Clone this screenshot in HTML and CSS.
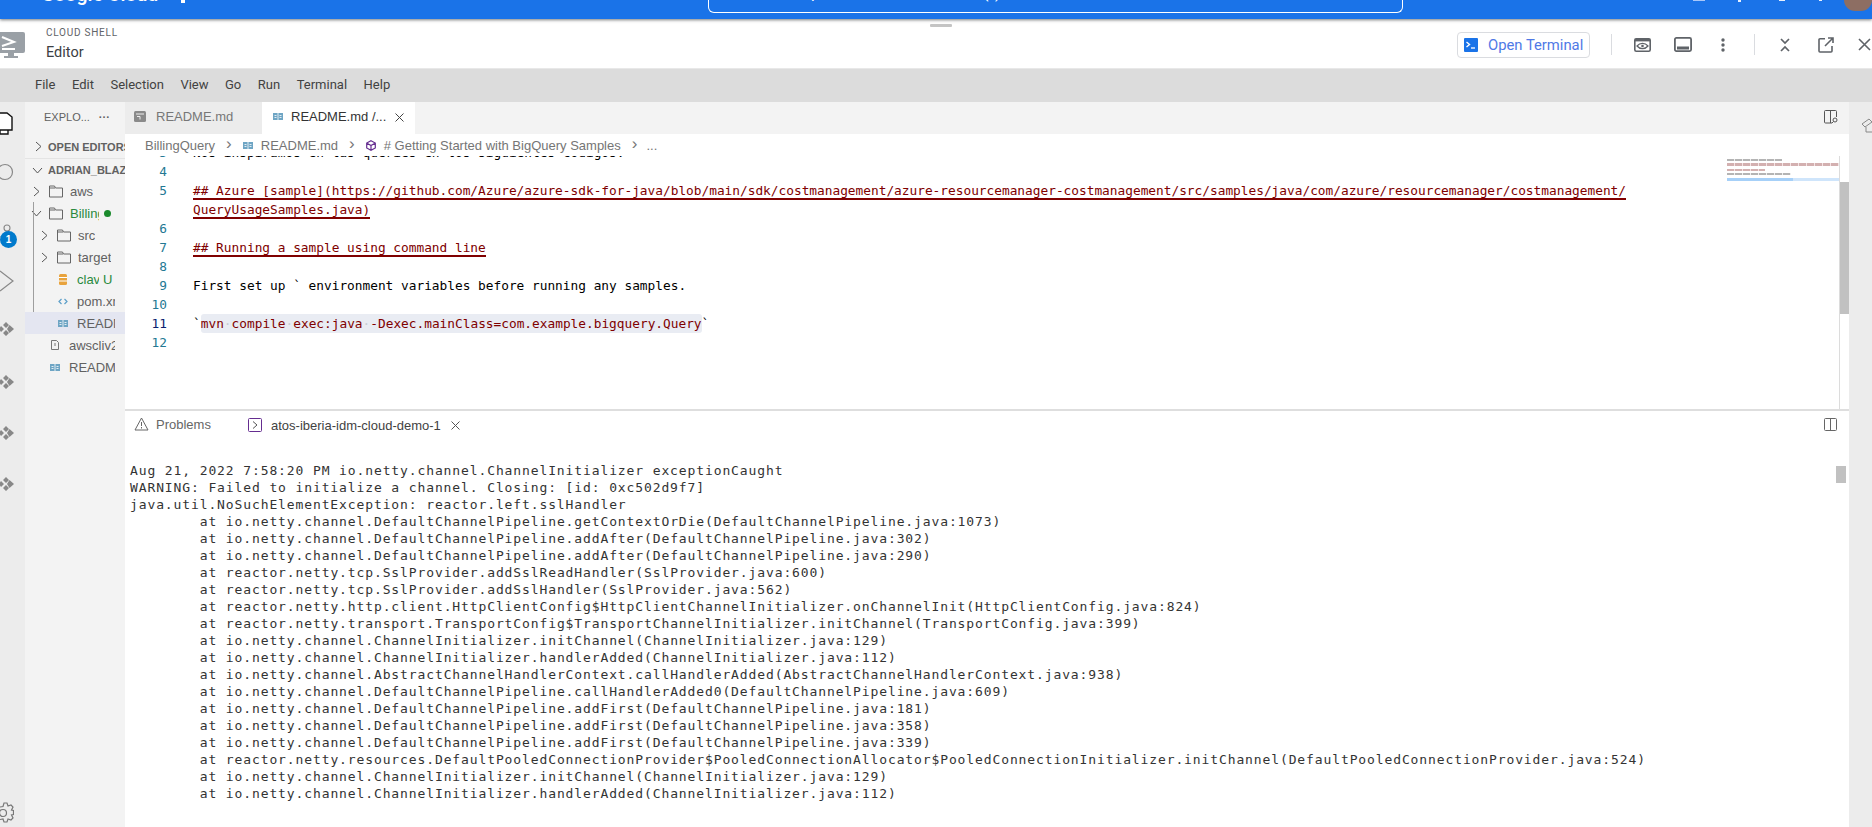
FILE: index.html
```html
<!DOCTYPE html>
<html lang="en">
<head>
<meta charset="utf-8">
<title>Cloud Shell Editor</title>
<link rel="stylesheet" href="styles.css">
</head>
<body>
<div class="topbar">
  <span class="brand">Google Cloud</span>
  <span class="project-dot"></span>
  <div class="search"><span class="search-text">Search products and resources (/)</span></div>
  <div class="top-right">
    <span class="top-bit t1"></span><span class="top-bit t2"></span><span class="top-bit t3"></span><span class="top-bit t4"></span>
    <span class="avatar"></span>
  </div>
</div>
<div class="grip"></div>
<header class="shell-header">
  <svg class="shell-logo" width="25" height="27" viewBox="0 0 25 27"><path fill="#9aa0a6" d="M0 0h23a2 2 0 0 1 2 2v17a2 2 0 0 1-2 2H0z"/><path fill="#9aa0a6" d="M8 21h6v3h4v2H4v-2h4z"/><path fill="none" stroke="#fff" stroke-width="2" d="M2 5l12 5-12 4"/><path stroke="#fff" stroke-width="2" d="M2 17h13"/></svg>
  <div class="shell-title"><div class="shell-kicker">CLOUD SHELL</div><div class="shell-name">Editor</div></div>
  <div class="spacer"></div>
  <button class="open-terminal">
    <svg width="14" height="14" viewBox="0 0 14 14"><rect width="14" height="14" rx="1" fill="#1a73e8"/><path d="M2.500 4l3 2.500-3 2.500" fill="none" stroke="#fff" stroke-width="1.400"/><path d="M7 10h4" stroke="#fff" stroke-width="1.300"/></svg>
    <span>Open Terminal</span>
  </button>
  <span class="divider d1"></span>
  <svg class="hicon i-eye" width="17" height="14" viewBox="0 0 17 14"><rect x=".8" y=".8" width="15.400" height="12.400" rx="1.500" fill="none" stroke="#5f6368" stroke-width="1.600"/><rect x=".8" y=".8" width="15.400" height="2.600" fill="#5f6368"/><path d="M3 8c3-3.600 8-3.600 11 0-3 3.600-8 3.600-11 0z" fill="none" stroke="#5f6368" stroke-width="1.200"/><circle cx="8.500" cy="8" r="1.300" fill="#5f6368"/></svg>
  <svg class="hicon i-panel" width="18" height="15" viewBox="0 0 18 15"><rect x=".9" y=".9" width="16.200" height="13.200" rx="1.500" fill="none" stroke="#5f6368" stroke-width="1.800"/><rect x="3" y="9.500" width="12" height="3" fill="#5f6368"/></svg>
  <svg class="hicon i-dots" width="4" height="14" viewBox="0 0 4 14"><circle cx="2" cy="2" r="1.700" fill="#5f6368"/><circle cx="2" cy="7" r="1.700" fill="#5f6368"/><circle cx="2" cy="12" r="1.700" fill="#5f6368"/></svg>
  <span class="divider d2"></span>
  <svg class="hicon i-fold" width="10" height="14" viewBox="0 0 10 14"><path d="M1 1l4 4 4-4M1 13l4-4 4 4" fill="none" stroke="#5f6368" stroke-width="1.700"/></svg>
  <svg class="hicon i-open" width="16" height="16" viewBox="0 0 16 16"><path d="M7 1.800H2a1 1 0 0 0-1 1V14a1 1 0 0 0 1 1h11a1 1 0 0 0 1-1V9M10 1h5v5M15 1L7 9" fill="none" stroke="#5f6368" stroke-width="1.600"/></svg>
  <svg class="hicon i-close" width="13" height="13" viewBox="0 0 13 13"><path d="M1 1l11 11M12 1L1 12" stroke="#5f6368" stroke-width="1.600"/></svg>
</header>
<nav class="menubar">
  <span>File</span><span>Edit</span><span>Selection</span><span>View</span><span>Go</span><span>Run</span><span>Terminal</span><span>Help</span>
</nav>
<div class="workbench">
  <aside class="activity">
    <svg class="act a1" width="13" height="24" viewBox="0 0 13 24"><path d="M0 1h7l5 4v13H0M0 18v4h8v-4" fill="#fff" stroke="#111" stroke-width="1.400"/></svg>
    <svg class="act a2" width="14" height="18" viewBox="0 0 14 18"><circle cx="5" cy="9" r="7.500" fill="none" stroke="#888" stroke-width="1.200"/></svg>
    <div class="act a3">
      <svg width="14" height="16" viewBox="0 0 14 16"><circle cx="7" cy="4" r="3" fill="none" stroke="#888" stroke-width="1.100"/><path d="M0 13c4 0 7-3 7-6" fill="none" stroke="#888" stroke-width="1.100"/></svg>
      <span class="badge">1</span>
    </div>
    <svg class="act a4" width="14" height="26" viewBox="0 0 14 26"><path d="M0 3l13 10L0 23" fill="none" stroke="#888" stroke-width="1.200"/></svg>
    <svg class="act a5" width="14" height="14" viewBox="0 0 14 14"><path fill="#888" d="M6 0l3 3-3 3-3-3zM6 8l3 3-3 3-3-3zM9.500 3L14 7l-4.500 4L7 7zM1 4l3 3-3 3-2-3z"/></svg>
    <svg class="act a6" width="14" height="14" viewBox="0 0 14 14"><path fill="#888" d="M6 0l3 3-3 3-3-3zM6 8l3 3-3 3-3-3zM9.500 3L14 7l-4.500 4L7 7zM1 4l3 3-3 3-2-3z"/></svg>
    <svg class="act a7" width="14" height="14" viewBox="0 0 14 14"><path fill="#888" d="M6 0l3 3-3 3-3-3zM6 8l3 3-3 3-3-3zM9.500 3L14 7l-4.500 4L7 7zM1 4l3 3-3 3-2-3z"/></svg>
    <svg class="act a8" width="14" height="14" viewBox="0 0 14 14"><path fill="#888" d="M6 0l3 3-3 3-3-3zM6 8l3 3-3 3-3-3zM9.500 3L14 7l-4.500 4L7 7zM1 4l3 3-3 3-2-3z"/></svg>
    <div class="spacer"></div>
    <svg class="act a9" width="14" height="24" viewBox="0 0 14 24"><path d="M0 5l3-.5L4 1h3l1 3 3-1 2 2-1.500 3 2 .500v4l-2 .500L13 16l-2 2-3-1-1 3H4l-1-3-3 .500" fill="none" stroke="#777" stroke-width="1.200"/><circle cx="3" cy="11" r="3.500" fill="none" stroke="#777" stroke-width="1.200"/></svg>
  </aside>
  <aside class="sidebar">
    <div class="side-head"><span>EXPLO...</span><span class="more">···</span></div>
    <div class="sec open-ed"><svg class="chev" width="7" height="11" viewBox="0 0 7 11"><path d="M1 1l5 4.500L1 10" fill="none" stroke="#555" stroke-width="1"/></svg><b>OPEN EDITORS</b></div>
    <div class="sec root"><svg class="chev-d" width="11" height="7" viewBox="0 0 11 7"><path d="M1 1l4.500 5L10 1" fill="none" stroke="#555" stroke-width="1"/></svg><b>ADRIAN_BLAZQUEZ</b></div>
    <div class="tree">
      <span class="guide"></span>
      <div class="row lvl1"><svg class="chev" width="7" height="11" viewBox="0 0 7 11"><path d="M1 1l5 4.500L1 10" fill="none" stroke="#555"/></svg><svg class="folder" width="14" height="13" viewBox="0 0 14 13"><path d="M.5 1h5l1 2h7v9H.5zM.5 3H6" fill="none" stroke="#666"/></svg><span class="name">aws</span></div>
      <div class="row lvl1 billing"><svg class="chev-d" width="11" height="7" viewBox="0 0 11 7"><path d="M1 1l4.500 5L10 1" fill="none" stroke="#555"/></svg><svg class="folder" width="14" height="13" viewBox="0 0 14 13"><path d="M.5 1h5l1 2h7v9H.5zM.5 3H6" fill="none" stroke="#666"/></svg><span class="name green clipped">BillingQuery</span><span class="dot"></span></div>
      <div class="row lvl2"><svg class="chev" width="7" height="11" viewBox="0 0 7 11"><path d="M1 1l5 4.500L1 10" fill="none" stroke="#555"/></svg><svg class="folder" width="14" height="13" viewBox="0 0 14 13"><path d="M.5 1h5l1 2h7v9H.5zM.5 3H6" fill="none" stroke="#666"/></svg><span class="name">src</span></div>
      <div class="row lvl2"><svg class="chev" width="7" height="11" viewBox="0 0 7 11"><path d="M1 1l5 4.500L1 10" fill="none" stroke="#555"/></svg><svg class="folder" width="14" height="13" viewBox="0 0 14 13"><path d="M.5 1h5l1 2h7v9H.5zM.5 3H6" fill="none" stroke="#666"/></svg><span class="name">target</span></div>
      <div class="row file2"><svg class="ficon" width="9" height="11" viewBox="0 0 9 11"><rect width="8" height="11" x=".5" rx="1.500" fill="#e8a33d"/><path d="M.5 3.500h8M.5 7h8" stroke="#fff"/></svg><span class="name green short">clave.json</span><span class="u">U</span></div>
      <div class="row file2"><svg class="ficon" width="10" height="7" viewBox="0 0 10 7"><path d="M3.500 1L1 3.500 3.500 6M6.500 1L9 3.500 6.500 6" fill="none" stroke="#5c9fc9" stroke-width="1.200"/></svg><span class="name">pom.xml</span></div>
      <div class="row file2 selected"><svg class="ficon" width="10" height="7" viewBox="0 0 10 7"><rect width="10" height="7" fill="#6ea5c4"/><path d="M5 0v7M1.500 2.500h2M1.500 4.500h2M6.500 2.500h2M6.500 4.500h2" stroke="#fff" stroke-width=".8"/></svg><span class="name">README.md</span></div>
      <div class="row file1"><svg class="ficon" width="8" height="10" viewBox="0 0 8 10"><path d="M.5.500h5l2 2v7h-7z" fill="none" stroke="#777"/><path d="M4 3v3" stroke="#777"/></svg><span class="name">awscliv2.zip</span></div>
      <div class="row file1"><svg class="ficon" width="10" height="7" viewBox="0 0 10 7"><rect width="10" height="7" fill="#6ea5c4"/><path d="M5 0v7M1.500 2.500h2M1.500 4.500h2M6.500 2.500h2M6.500 4.500h2" stroke="#fff" stroke-width=".8"/></svg><span class="name">README.md</span></div>
    </div>
  </aside>
  <main class="main">
    <div class="tabs">
      <div class="tab tab-off"><svg width="12" height="11" viewBox="0 0 12 11"><rect width="12" height="11" rx="1.500" fill="#8a8a8a"/><path d="M2 3h8M3 5.500h3v3" stroke="#eee" fill="none"/></svg><span>README.md</span></div>
      <div class="tab tab-on"><svg width="10" height="7" viewBox="0 0 10 7"><rect width="10" height="7" fill="#6ea5c4"/><path d="M5 0v7M1.500 2.500h2M1.500 4.500h2M6.500 2.500h2M6.500 4.500h2" stroke="#fff" stroke-width=".8"/></svg><span>README.md /...</span><svg class="tab-x" width="9" height="9" viewBox="0 0 9 9"><path d="M.5.500l8 8M8.500.500l-8 8" stroke="#444" stroke-width="1"/></svg></div>
      <div class="spacer"></div>
      <svg class="split-preview" width="14" height="14" viewBox="0 0 14 14"><path d="M8 13H1.500a1 1 0 0 1-1-1V1.500a1 1 0 0 1 1-1h10a1 1 0 0 1 1 1V7M6.500.500V13" fill="none" stroke="#555"/><circle cx="11" cy="10" r="2" fill="none" stroke="#555"/><path d="M9.500 11.500L8 13" stroke="#555"/></svg>
    </div>
    <div class="editor">
      <div class="crumbs">
        <span>BillingQuery</span><i>›</i>
        <svg width="10" height="7" viewBox="0 0 10 7"><rect width="10" height="7" fill="#6ea5c4"/><path d="M5 0v7M1.500 2.500h2M1.500 4.500h2M6.500 2.500h2M6.500 4.500h2" stroke="#fff" stroke-width=".8"/></svg>
        <span>README.md</span><i>›</i>
        <svg width="10" height="11" viewBox="0 0 10 11"><path d="M5 .700l4.300 2.400v4.800L5 10.300.7 7.900V3.100zM.7 3.100L5 5.500l4.300-2.400M5 5.500v4.800" fill="none" stroke="#652d90" stroke-width="1.200"/></svg>
        <span># Getting Started with BigQuery Samples</span><i>›</i><span>...</span>
      </div>
      <div class="code">
        <div class="ln"><span class="n">3</span><span class="t">Nos inspiramos en las queries en los siguientes codigos:</span></div>
        <div class="ln"><span class="n">4</span></div>
        <div class="ln"><span class="n">5</span><span class="t"><span class="h">## Azure [sample](https://github.com/Azure/azure-sdk-for-java/blob/main/sdk/costmanagement/azure-resourcemanager-costmanagement/src/samples/java/com/azure/resourcemanager/costmanagement/</span></span></div>
        <div class="ln"><span class="n"></span><span class="t"><span class="h">QueryUsageSamples.java)</span></span></div>
        <div class="ln"><span class="n">6</span></div>
        <div class="ln"><span class="n">7</span><span class="t"><span class="h">## Running a sample using command line</span></span></div>
        <div class="ln"><span class="n">8</span></div>
        <div class="ln"><span class="n">9</span><span class="t">First set up ` environment variables before running any samples.</span></div>
        <div class="ln"><span class="n">10</span></div>
        <div class="ln cur"><span class="n">11</span><span class="t">`<span class="mark">mvn<b>·</b>compile<b>·</b>exec:java<b>·</b>-Dexec.mainClass=com.example.bigquery.Query</span>`</span></div>
        <div class="ln"><span class="n">12</span></div>
      </div>
      <div class="minimap">
        <i class="m r" style="width:39px"></i>
        <i class="m k" style="width:55px"></i>
        <i class="m r wide" style="width:112px"></i>
        <i class="m r" style="width:38px"></i>
        <i class="m k" style="width:64px"></i>
        <div class="m-sel"><span></span></div>
      </div>
      <div class="scrolltrack"><span class="scrollthumb"></span></div>
    </div>
    <section class="panel">
      <div class="panel-tabs">
        <div class="ptab"><svg width="15" height="14" viewBox="0 0 15 14"><path d="M7.500 1L14 13H1zM7.500 5v4M7.500 10v1.500" fill="none" stroke="#666"/></svg><span>Problems</span></div>
        <div class="ptab active"><svg width="14" height="14" viewBox="0 0 14 14"><rect x=".5" y=".5" width="13" height="13" rx="1" fill="none" stroke="#652d90"/><path d="M5 3.500L9 7l-4 3.500" fill="none" stroke="#555"/></svg><span>atos-iberia-idm-cloud-demo-1</span><svg class="tab-x" width="9" height="9" viewBox="0 0 9 9"><path d="M.5.500l8 8M8.500.500l-8 8" stroke="#555"/></svg></div>
        <div class="spacer"></div>
        <svg class="psplit" width="13" height="13" viewBox="0 0 13 13"><rect x=".5" y=".5" width="12" height="12" rx="1" fill="none" stroke="#666"/><path d="M6.500 .5v12" stroke="#666"/></svg>
      </div>
      <pre class="term">Aug 21, 2022 7:58:20 PM io.netty.channel.ChannelInitializer exceptionCaught
WARNING: Failed to initialize a channel. Closing: [id: 0xc502d9f7]
java.util.NoSuchElementException: reactor.left.sslHandler
	at io.netty.channel.DefaultChannelPipeline.getContextOrDie(DefaultChannelPipeline.java:1073)
	at io.netty.channel.DefaultChannelPipeline.addAfter(DefaultChannelPipeline.java:302)
	at io.netty.channel.DefaultChannelPipeline.addAfter(DefaultChannelPipeline.java:290)
	at reactor.netty.tcp.SslProvider.addSslReadHandler(SslProvider.java:600)
	at reactor.netty.tcp.SslProvider.addSslHandler(SslProvider.java:562)
	at reactor.netty.http.client.HttpClientConfig$HttpClientChannelInitializer.onChannelInit(HttpClientConfig.java:824)
	at reactor.netty.transport.TransportConfig$TransportChannelInitializer.initChannel(TransportConfig.java:399)
	at io.netty.channel.ChannelInitializer.initChannel(ChannelInitializer.java:129)
	at io.netty.channel.ChannelInitializer.handlerAdded(ChannelInitializer.java:112)
	at io.netty.channel.AbstractChannelHandlerContext.callHandlerAdded(AbstractChannelHandlerContext.java:938)
	at io.netty.channel.DefaultChannelPipeline.callHandlerAdded0(DefaultChannelPipeline.java:609)
	at io.netty.channel.DefaultChannelPipeline.addFirst(DefaultChannelPipeline.java:181)
	at io.netty.channel.DefaultChannelPipeline.addFirst(DefaultChannelPipeline.java:358)
	at io.netty.channel.DefaultChannelPipeline.addFirst(DefaultChannelPipeline.java:339)
	at reactor.netty.resources.DefaultPooledConnectionProvider$PooledConnectionAllocator$PooledConnectionInitializer.initChannel(DefaultPooledConnectionProvider.java:524)
	at io.netty.channel.ChannelInitializer.initChannel(ChannelInitializer.java:129)
	at io.netty.channel.ChannelInitializer.handlerAdded(ChannelInitializer.java:112)</pre>
      <span class="term-thumb"></span>
    </section>
  </main>
  <aside class="right-strip">
    <svg width="12" height="15" viewBox="0 0 12 15"><path d="M8 1L1 6l3 3 7-5zM5 9v5h7V8" fill="none" stroke="#888"/></svg>
  </aside>
</div>
</body>
</html>
```

FILE: styles.css
```css
* { box-sizing: border-box; }
html, body { margin: 0; height: 827px; overflow: hidden; background: #fff; }
body { font-family: "Liberation Sans", Arial, sans-serif; color: #333; display: flex; flex-direction: column; position: relative; }
.spacer { flex: 1; }

.topbar { height: 19px; background: #1a73e8; box-shadow: 0 1px 3px rgba(60,64,67,.7); display: flex; position: relative; z-index: 2; overflow: hidden; flex: none; color: #fff; }
.brand { width: 115px; flex: none; margin: -17px 0 0 41px; font: 500 19.5px/24px Roboto, sans-serif; white-space: nowrap; }
.project-dot { width: 4px; height: 3px; background: #fff; margin-left: 25px; flex: none; }
.search { width: 695px; height: 13px; margin: 0 0 0 523px; border: 1px solid #fff; border-top: 0; border-radius: 0 0 6px 6px; padding-left: 49px; overflow: hidden; flex: none; }
.search-text { display: block; margin-top: -16px; font: 16px/18px Roboto, sans-serif; }
.top-right { margin-left: auto; display: flex; align-items: flex-start; }
.top-bit { display: block; width: 4px; height: 2px; background: #e8f0fe; margin-right: 36px; }
.t1 { width: 12px; height: 1px; background: #a8c7fa; margin-right: 33px; }
.t2 { height: 2px; width: 3px; margin-right: 38px; }
.t3 { width: 6px; height: 1px; margin-right: 34px; }
.t4 { width: 3px; height: 1px; margin-right: 22px; }
.avatar { width: 28px; height: 11px; background: #8d6e63; border-radius: 0 0 14px 14px; }

.grip { position: absolute; left: 930px; top: 24px; width: 22px; height: 3px; background: #c4c4c4; border-radius: 1px; z-index: 3; }
.shell-header { height: 49px; flex: none; margin-top: 1px; display: flex; align-items: center; background: #fff; border-bottom: 1px solid #e8e8e8; }
.shell-logo { margin: 3px 0 0; flex: none; }
.shell-title { margin-left: 21px; margin-top: 1px; }
.shell-kicker { font: 10px/14px Roboto, sans-serif; letter-spacing: .75px; color: #5f6368; }
.shell-name { font: 14.5px/20px Roboto, sans-serif; color: #3c4043; margin-top: 3px; }
.open-terminal { width: 133px; height: 26px; border: 1px solid #dadce0; border-radius: 4px; background: #fff; display: flex; align-items: center; gap: 10px; padding: 0 0 0 6px; font: 14.8px Roboto, sans-serif; color: #4f79e6; margin: 1px 0 0; white-space: nowrap; }
.divider { width: 1px; height: 21px; background: #dadce0; flex: none; }
.d1 { margin: 1px 22px 0 21px; }
.d2 { margin: 1px 25px 0 29px; }
.hicon { flex: none; margin-top: 1px; }
.i-panel { margin-left: 23px; }
.i-dots { margin-left: 29px; }
.i-open { margin-left: 28px; }
.i-close { margin: 1px 1px 0 24px; }

.menubar { height: 33px; flex: none; background: #dcdcdc; display: flex; align-items: center; padding: 0 0 2px 35px; gap: 16.5px; font: 13px Roboto, sans-serif; color: #424242; }

.workbench { height: 726px; flex: none; display: flex; }
.activity { width: 25px; flex: none; background: #ececec; display: flex; flex-direction: column; align-items: flex-start; position: relative; overflow: hidden; }
.act { display: block; flex: none; }
.a1 { margin-top: 10px; }
.a2 { margin-top: 27px; }
.a3 { margin-top: 43px; position: relative; width: 25px; height: 16px; }
.badge { position: absolute; left: 0; top: 7px; width: 17px; height: 17px; border-radius: 50%; background: #007acc; color: #fff; font: bold 10px/17px "Liberation Sans", sans-serif; text-align: center; }
.a4 { margin-top: 28px; }
.a5 { margin-top: 28px; }
.a6 { margin-top: 39px; }
.a7 { margin-top: 37px; }
.a8 { margin-top: 37px; }
.a9 { margin-bottom: 2px; }

.sidebar { width: 100px; flex: none; background: #f3f3f3; overflow: hidden; font-size: 13px; color: #616161; }
.side-head { height: 32px; display: flex; align-items: center; padding: 0 0 3px 19px; font-size: 11px; color: #616161; }
.side-head .more { margin-left: 9px; font-weight: bold; font-size: 11px; letter-spacing: 0; }
.sec { height: 22px; display: flex; align-items: center; white-space: nowrap; font-size: 11px; overflow: hidden; }
.sec svg { flex: none; }
.sec b { font-weight: bold; color: #616161; }
.open-ed { padding-left: 10px; border-bottom: 1px solid #e4e4e4; height: 25px; gap: 6px; padding-top: 1px; }
.root { padding-left: 7px; gap: 5px; height: 22px; }
.tree { position: relative; margin-top: -1px; }
.guide { position: absolute; left: 8px; top: 22px; width: 1px; height: 110px; background: #9e9e9e; z-index: 1; }
.row { height: 22px; display: flex; align-items: center; white-space: nowrap; padding-right: 10px; }
.row svg { flex: none; }
.name { overflow: hidden; flex: none; }
.lvl1 { padding-left: 8px; }
.lvl1 .chev { margin-right: 9px; }
.lvl1 .chev-d { margin: 0 7px 0 -2px; }
.lvl1 .folder { margin-right: 7px; }
.lvl2 { padding-left: 16px; }
.lvl2 .chev { margin-right: 9px; }
.lvl2 .folder { margin-right: 7px; }
.green { color: #2a8a3e; }
.clipped { width: 29px; }
.dot { width: 7px; height: 7px; border-radius: 50%; background: #1a8a2c; margin-left: 5px; flex: none; }
.u { color: #2a8a3e; margin-left: 4px; }
.file2 { padding-left: 33px; }
.file2 .ficon { width: 10px; margin-right: 9px; }
.file1 { padding-left: 25px; }
.file1 .ficon { width: 10px; margin-right: 9px; }
.file2 .name { width: 38px; }
.file2 .short { width: 22px; }
.file1 .name { width: 46px; }
.selected { background: #e4e6f1; }

.main { width: 1724px; flex: none; display: flex; flex-direction: column; background: #fff; }
.tabs { height: 32px; flex: none; background: #f3f3f3; display: flex; align-items: stretch; }
.tab { display: flex; align-items: center; font-size: 13px; white-space: nowrap; padding-bottom: 3px; }
.tab-off { width: 137px; background: #ececec; padding-left: 9px; gap: 10px; color: #777; }
.tab-on { width: 153px; background: #fff; padding-left: 11px; gap: 8px; color: #333; }
.tab-on .tab-x { margin-left: 1px; margin-top: 2px; }
.split-preview { align-self: center; margin: 0 11px 3px 0; }

.editor { height: 275px; flex: none; position: relative; overflow: hidden; }
.crumbs { height: 22px; display: flex; align-items: center; padding-left: 20px; font-size: 13px; color: #757575; background: #fff; position: relative; z-index: 1; white-space: nowrap; }
.crumbs i { font-style: normal; font-size: 17px; margin: -2px 11px 0 11px; color: #777; }
.crumbs svg { margin-right: 8px; flex: none; }
.crumbs span:last-child { margin-left: -2px; }
.code { margin-top: -13px; font: 12.8px/19px "DejaVu Sans Mono", monospace; color: #000; }
.ln { height: 19px; display: flex; white-space: pre; }
.n { width: 42px; flex: none; text-align: right; color: #237893; }
.cur .n { color: #0b216f; }
.t { margin-left: 26px; }
.h { color: #800000; border-bottom: 2px solid #800000; }
.mark { color: #800000; background: #e9ecf3; border-radius: 3px; display: inline-block; height: 19px; }
.mark b { font-weight: normal; color: #c8ccd4; }
.minimap { position: absolute; left: 1602px; top: 20px; width: 112px; display: flex; flex-direction: column; gap: 2.5px; }
.m { display: block; height: 2px; background: repeating-linear-gradient(90deg, #d3b0b0 0 7px, #f4e4e4 7px 8px); }
.m.k { background: repeating-linear-gradient(90deg, #b4b4b4 0 7px, #eee 7px 8px); }
.m.wide { height: 3px; }
.m-sel { height: 3px; background: #cfe5fb; }
.m-sel span { display: block; width: 66px; height: 3px; background: #a6d0f8; }
.scrolltrack { position: absolute; right: 0; top: 22px; width: 10px; height: 253px; border-left: 1px solid #dcdcdc; }
.scrollthumb { display: block; margin-top: 26px; height: 132px; background: #c1c1c1; }

.panel { flex: 1; border-top: 2px solid #dedede; position: relative; overflow: hidden; }
.panel-tabs { height: 32px; display: flex; align-items: center; font-size: 13px; color: #666; margin-top: -2px; }
.ptab { display: flex; align-items: center; height: 32px; white-space: nowrap; padding-bottom: 2px; }
.ptab:first-child { margin-left: 9px; width: 105px; gap: 7px; }
.ptab.active { width: 229px; border-top: 2px solid #424242; padding-left: 9px; gap: 9px; color: #424242; }
.ptab.active .tab-x { margin-left: 1px; }
.psplit { margin: 0 12px 2px 0; }
.term { margin: 21px 0 0 5px; font: 13px/17px "DejaVu Sans Mono", monospace; letter-spacing: .885px; tab-size: 8; color: #333; }
.term-thumb { position: absolute; left: 1711px; top: 55px; width: 10px; height: 17px; background: #c1c1c1; }

.right-strip { width: 23px; flex: none; background: #ececec; padding: 16px 0 0 12px; }
```
